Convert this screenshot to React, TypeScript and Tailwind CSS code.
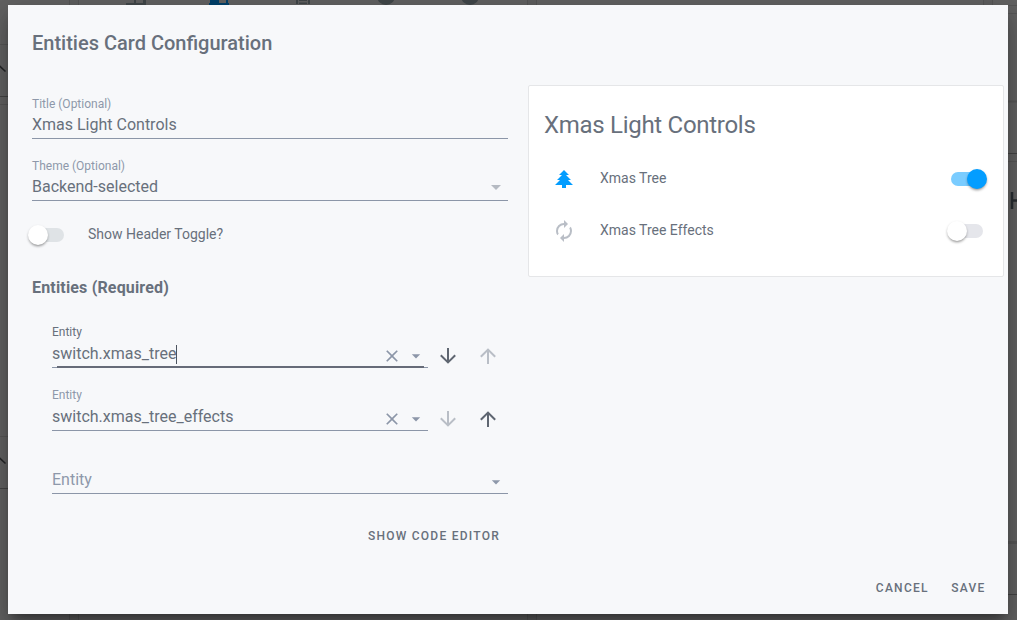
import React from "react";

const icons = {
  tree: "M10,21V18H3L8,13H5L10,8H7L12,3L17,8H14L19,13H16L21,18H14V21H10Z",
  renew:
    "M12,6V9L16,5L12,1V4A8,8 0 0,0 4,12C4,13.57 4.46,15.03 5.24,16.26L6.7,14.8C6.25,13.97 6,13 6,12A6,6 0 0,1 12,6M18.76,7.74L17.3,9.2C17.74,10.04 18,11 18,12A6,6 0 0,1 12,18V15L8,19L12,23V20A8,8 0 0,0 20,12C20,10.43 19.54,8.97 18.76,7.74Z",
  down: "M11,4H13V16L18.5,10.5L19.92,11.92L12,19.84L4.08,11.92L5.5,10.5L11,16V4Z",
  up: "M13,20H11V8L5.5,13.5L4.08,12.08L12,4.16L19.92,12.08L18.5,13.5L13,8V20Z",
  close:
    "M19,6.41L17.59,5L12,10.59L6.41,5L5,6.41L10.59,12L5,17.59L6.41,19L12,13.41L17.59,19L19,17.59L13.41,12L19,6.41Z",
  caret: "M7,10L12,15L17,10H7Z",
};

function Icon({ name, className }: { name: keyof typeof icons; className: string }) {
  return (
    <svg viewBox="0 0 24 24" className={`shrink-0 fill-current ${className}`}>
      <path d={icons[name]} />
    </svg>
  );
}

function Toggle({ on = false, track = "bg-[#e5e6eb]" }: { on?: boolean; track?: string }) {
  return (
    <span className={`relative block h-3.5 w-8 shrink-0 rounded-full ${on ? "bg-[#7accff]" : track}`}>
      <span
        className={`absolute -top-[3px] size-5 rounded-full shadow-[0_2px_3px_-1px_rgba(0,0,0,0.4),0_1px_3px_rgba(0,0,0,0.12)] ${
          on ? "left-4 bg-[#039dff]" : "-left-1 bg-white"
        }`}
      />
    </span>
  );
}

function TextField({ label, value, dropdown }: { label: string; value: string; dropdown?: boolean }) {
  return (
    <div className="border-b border-[#8c96a8]">
      <div className="h-5 text-xs leading-5 text-[#8e98aa]">{label}</div>
      <div className="flex h-6 items-center justify-between">
        <span className="-mt-0.5 text-base leading-6">{value}</span>
        {dropdown && <Icon name="caret" className="-mt-0.5 size-6 text-[#b5bac2]" />}
      </div>
    </div>
  );
}

function EntityRow({ value, focused, first }: { value: string; focused?: boolean; first?: boolean }) {
  return (
    <div className="flex h-[46px]">
      <div className="relative w-[376px] border-b border-[#8c96a8]">
        <div className={`h-5 text-xs leading-5 ${focused ? "text-[#68707c]" : "text-[#8e98aa]"}`}>Entity</div>
        <div className="flex h-[26px] items-center text-[#8c96a8]">
          <span className="-mt-0.5 text-base leading-6 text-[#68707c]">{value}</span>
          {focused && <span className="-mt-0.5 h-[19px] w-px bg-[#4d5460]" />}
          <Icon name="close" className="ml-auto mt-0.5 size-5" />
          <Icon name="caret" className="ml-1 mr-0.5 mt-0.5 size-5" />
        </div>
        {focused && <span className="absolute -bottom-px left-[5px] h-0.5 w-[367px] bg-[#666b78]" />}
      </div>
      <div className="ml-2 flex gap-4 pt-[22px]">
        <Icon name="down" className={`size-6 ${first ? "text-[#5f6671]" : "text-[#b9bec6]"}`} />
        <Icon name="up" className={`size-6 ${first ? "text-[#b9bec6]" : "text-[#5f6671]"}`} />
      </div>
    </div>
  );
}

function Dashboard() {
  return (
    <div className="absolute inset-0 bg-[#626262]">
      <span className="absolute left-[69px] top-0 h-full w-2.5 border-x border-[#555] bg-[#5f5f5f]" />
      <span className="absolute left-[527px] top-0 h-full w-2.5 border-x border-[#555] bg-[#5f5f5f]" />
      <span className="absolute left-[983px] top-0 h-2 w-2.5 border-x border-[#555] bg-[#5f5f5f]" />
      <svg viewBox="0 0 1017 620" className="absolute inset-0 size-full">
        <g fill="none" stroke="#575757">
          <path d="M0 44.5H8M0 104.5H8M0 436.5H8M992 5.5H1017M1008 13.5H1017M1008 161.5H1017M1008 543.5H1017" />
          <path d="M1008 101.5H1017M1008 542H1017" strokeWidth="2" />
        </g>
        <path d="M0 96.5H8M0 488.5H8M1008 153.5H1017M1008 594.5H1017" stroke="#444" strokeWidth="1" />
        <path d="M-1 65.5L5.500 71.500M-1 457.500L5.500 463.500" stroke="#242628" strokeWidth="1.6" />
        <path d="M126 5V3H134V0H136V3H143V0H146V5Z" fill="#414749" />
        <path d="M209 5V3H210V0H219V3H226V0H228V3H229V5Z" fill="#00416b" />
        <path d="M296 0H298V4H296ZM308 0H310V4H308ZM299 0H307V1H299ZM299 2.500H307V4H299Z" fill="#414749" />
        <circle cx="386" cy="-4" r="9" fill="#414749" />
        <circle cx="470" cy="-4" r="9" fill="#414749" />
        <path d="M1012 192V209M1012 200.500H1018" fill="none" stroke="#292d31" strokeWidth="2.5" />
      </svg>
    </div>
  );
}

export default function App() {
  return (
    <div className="relative h-[620px] w-[1017px] overflow-hidden pl-2 pt-[5px] font-['Roboto',sans-serif] text-[#68707c]">
      <Dashboard />
      <main className="relative flex h-[609px] w-[1000px] flex-col bg-[#f7f8fa] shadow-[0_16px_24px_2px_rgba(0,0,0,0.14),0_6px_30px_5px_rgba(0,0,0,0.12),0_8px_10px_-5px_rgba(0,0,0,0.4)]">
        <h1 className="ml-6 mt-[22px] text-xl font-medium leading-8">Entities Card Configuration</h1>
        <div className="mt-[26px] flex">
          <section className="ml-6 mt-[9px] w-[476px]">
            <TextField label="Title (Optional)" value="Xmas Light Controls" />
            <div className="mt-[17px]">
              <TextField label="Theme (Optional)" value="Backend-selected" dropdown />
            </div>
            <div className="mt-[22px] flex h-6 items-center text-sm">
              <Toggle track="bg-[#dfe3e6]" />
              <span className="-mt-0.5 ml-6">Show Header Toggle?</span>
            </div>
            <h2 className="mt-[29px] text-base font-bold leading-6 tracking-[0.17px]">Entities (Required)</h2>
            <div className="ml-5 mt-[22px]">
              <EntityRow value="switch.xmas_tree" focused first />
              <div className="mt-[17px]">
                <EntityRow value="switch.xmas_tree_effects" />
              </div>
              <div className="mt-[38px] flex h-[25px] items-center justify-between border-b border-[#8c96a8] text-[#8e98aa]">
                <span className="-mt-0.5 text-base leading-6">Entity</span>
                <Icon name="caret" className="mr-0.5 mt-0.5 size-5" />
              </div>
            </div>
            <div className="mt-8 flex justify-end pr-2">
              <button className="text-xs font-medium leading-5 tracking-[1.25px]">SHOW CODE EDITOR</button>
            </div>
          </section>
          <aside className="ml-5 h-48 w-[476px] rounded-[2px] border border-[#e5e6e8] bg-white pl-[15px] pr-5">
            <h2 className="mt-[23px] text-2xl leading-8 tracking-[-0.288px]">Xmas Light Controls</h2>
            <div className="mt-[26px] flex h-6 items-center text-sm">
              <Icon name="tree" className="ml-2 size-6 text-[#039dff]" />
              <span className="-mt-0.5 ml-6 grow">Xmas Tree</span>
              <Toggle on />
            </div>
            <div className="mt-7 flex h-6 items-center text-sm">
              <Icon name="renew" className="ml-2 size-6 text-[#b9bec6]" />
              <span className="-mt-0.5 ml-6 grow">Xmas Tree Effects</span>
              <Toggle />
            </div>
          </aside>
        </div>
        <footer className="mb-4 mr-[22px] mt-auto flex justify-end gap-[22.5px] text-xs font-medium leading-5 tracking-[1.25px]">
          <button>CANCEL</button>
          <button className="mr-[0.5px]">SAVE</button>
        </footer>
      </main>
    </div>
  );
}
